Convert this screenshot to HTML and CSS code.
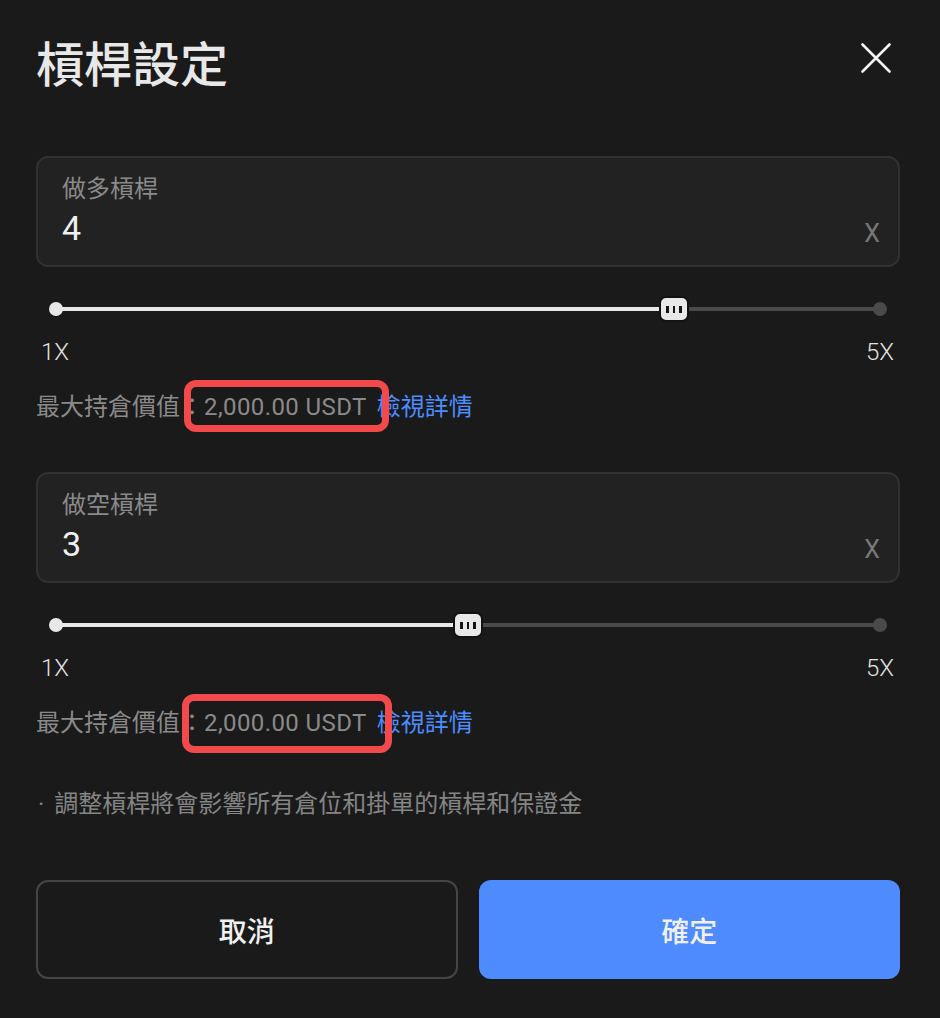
FILE: index.html
```html
<!DOCTYPE html>
<html lang="zh-Hant">
<head>
<meta charset="utf-8">
<title>槓桿設定</title>
<link rel="stylesheet" href="styles.css">
</head>
<body>
<div class="dialog">
  <header class="header">
    <h1 class="title">槓桿設定</h1>
    <svg class="close" width="30" height="30" viewBox="0 0 30 30" aria-label="關閉">
      <path d="M1.5 1.5 L28.5 28.5 M28.5 1.5 L1.5 28.5" stroke="#f2f2f2" stroke-width="2.6" stroke-linecap="round" fill="none"/>
    </svg>
  </header>

  <section class="section">
    <div class="field">
      <div class="field-label">做多槓桿</div>
      <div class="field-row">
        <span class="field-value">4</span>
        <span class="field-suffix">X</span>
      </div>
    </div>
    <div class="slider">
      <div class="track"></div>
      <div class="fill" style="width:75%"></div>
      <span class="dot dot-start"></span>
      <span class="dot dot-end"></span>
      <span class="thumb" style="left:75%"><i></i><i></i><i></i></span>
    </div>
    <div class="scale"><span>1X</span><span>5X</span></div>
    <p class="max">最大持倉價值：<span class="amount mark-a">2,000.00 USDT</span><a class="link" href="#">檢視詳情</a></p>
  </section>

  <section class="section section-next">
    <div class="field">
      <div class="field-label">做空槓桿</div>
      <div class="field-row">
        <span class="field-value">3</span>
        <span class="field-suffix">X</span>
      </div>
    </div>
    <div class="slider">
      <div class="track"></div>
      <div class="fill" style="width:50%"></div>
      <span class="dot dot-start"></span>
      <span class="dot dot-end"></span>
      <span class="thumb" style="left:50%"><i></i><i></i><i></i></span>
    </div>
    <div class="scale"><span>1X</span><span>5X</span></div>
    <p class="max">最大持倉價值：<span class="amount mark-b">2,000.00 USDT</span><a class="link" href="#">檢視詳情</a></p>
  </section>

  <p class="note"><span class="bullet">·</span>調整槓桿將會影響所有倉位和掛單的槓桿和保證金</p>

  <div class="actions">
    <button class="btn btn-cancel">取消</button>
    <button class="btn btn-confirm">確定</button>
  </div>
</div>
</body>
</html>
```

FILE: styles.css
```css
* { box-sizing: border-box; }

html, body {
  margin: 0;
  padding: 0;
  background: #1a1a1a;
}

body {
  font-family: Roboto, "Noto Sans CJK TC", "Noto Sans", sans-serif;
  color: #e6e6e6;
}

.dialog {
  width: 940px;
  height: 1018px;
  padding: 38px 40px 0 36px;
}

.header {
  display: flex;
  justify-content: space-between;
  align-items: flex-start;
  height: 56px;
}

.title {
  margin: 0;
  font-size: 48px;
  line-height: 56px;
  font-weight: 500;
  color: #e8e8e8;
  letter-spacing: 0;
}

.close {
  display: block;
  margin-top: 5px;
  margin-right: 9px;
}

.section {
  margin-top: 62px;
}

.section-next {
  margin-top: 49px;
}

.field {
  height: 111px;
  background: #222222;
  border: 2px solid #313131;
  border-radius: 12px;
  padding: 15px 18px 0 24px;
}

.field-label {
  font-size: 24px;
  line-height: 32px;
  color: #8a8a8a;
}

.field-row {
  display: flex;
  justify-content: space-between;
  align-items: flex-end;
  margin-top: 3px;
}

.field-value {
  font-size: 34px;
  line-height: 40px;
  color: #f0f0f0;
}

.field-suffix {
  font-size: 25px;
  line-height: 28px;
  color: #787878;
}

.slider {
  position: relative;
  height: 26px;
  margin: 29px 20px 0 20px;
}

.track {
  position: absolute;
  left: 0;
  right: 0;
  top: 11px;
  height: 4px;
  border-radius: 2px;
  background: #4a4a4a;
}

.fill {
  position: absolute;
  left: 0;
  top: 11px;
  height: 4px;
  background: #e8e8e8;
}

.dot {
  position: absolute;
  top: 6px;
  width: 14px;
  height: 14px;
  border-radius: 50%;
}

.dot-start {
  left: -7px;
  background: #e8e8e8;
}

.dot-end {
  right: -7px;
  background: #4a4a4a;
}

.thumb {
  position: absolute;
  top: 0;
  width: 30px;
  height: 26px;
  transform: translateX(-50%);
  background: #e8e8e8;
  border: 2px solid #121212;
  border-radius: 7px;
  display: flex;
  justify-content: center;
  align-items: center;
  gap: 4px;
}

.thumb i {
  display: block;
  width: 2.5px;
  height: 7px;
  background: #141414;
}

.scale {
  display: flex;
  justify-content: space-between;
  margin: 16px 6px 0 5px;
  font-size: 24px;
  line-height: 28px;
  font-weight: 300;
  color: #e2e2e2;
}

.max {
  margin: 25px 0 0 0;
  font-size: 24px;
  line-height: 32px;
  color: #8a8a8a;
  white-space: nowrap;
}

.amount {
  position: relative;
  letter-spacing: 0.4px;
}

.amount::after {
  content: "";
  position: absolute;
  border: 7px solid #f24a4a;
  border-radius: 12px;
}

.mark-a::after {
  left: -20px;
  right: -22px;
  top: -13px;
  bottom: -11px;
}

.mark-b::after {
  left: -22px;
  right: -25px;
  top: -15px;
  bottom: -16px;
}

.link {
  margin-left: 10px;
  color: #4c8dff;
  text-decoration: none;
}

.note {
  margin: 49px 0 0 0;
  font-size: 24px;
  line-height: 32px;
  color: #858585;
}

.bullet {
  display: inline-block;
  margin-left: 2px;
  margin-right: 10px;
}

.actions {
  display: grid;
  grid-template-columns: 1fr 1fr;
  gap: 21px;
  margin-top: 60px;
}

.btn {
  height: 99px;
  border-radius: 12px;
  font-family: Roboto, "Noto Sans CJK TC", sans-serif;
  font-size: 28px;
  font-weight: 500;
  color: #f0f0f0;
  cursor: pointer;
}

.btn-cancel {
  background: transparent;
  border: 2px solid #454545;
}

.btn-confirm {
  background: #4d8bff;
  border: none;
}
```
